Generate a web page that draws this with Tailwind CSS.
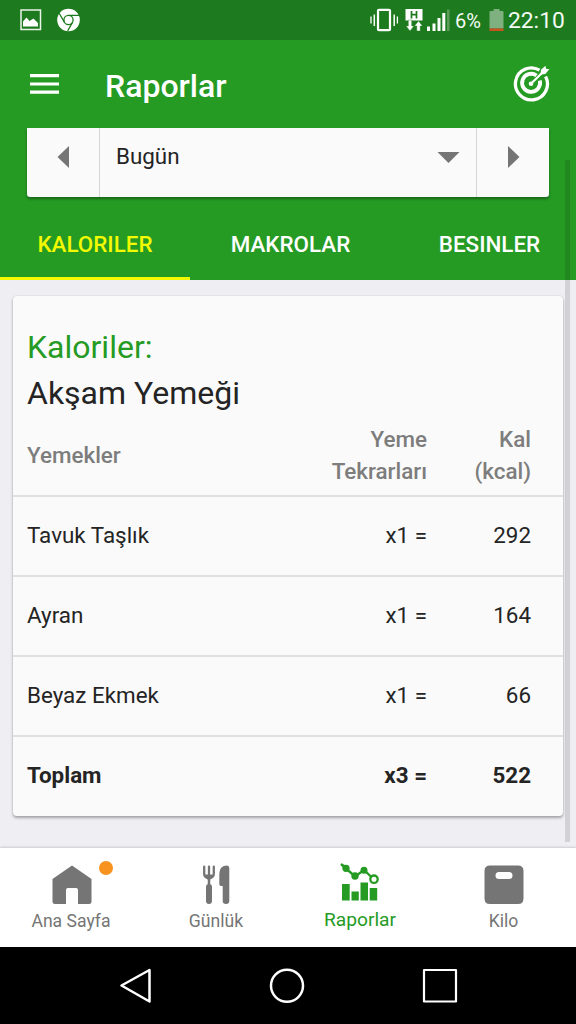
<!DOCTYPE html>
<html lang="tr">
<head>
<meta charset="utf-8">
<title>Raporlar</title>
<script src="https://cdn.jsdelivr.net/npm/@tailwindcss/browser@4"></script>
</head>
<body class="bg-black">
<div class="relative flex h-[1024px] w-[576px] flex-col overflow-hidden bg-[#efeef3] font-[Roboto,'Noto_Sans',sans-serif] text-[#242424]">

  <!-- status bar -->
  <div class="flex h-10 shrink-0 items-center bg-[#1e7a1e] pl-5 text-[#f4fbf4]">
    <svg class="mr-[15px] h-[22px] w-[22px]" viewBox="0 0 22 22"><rect x="1" y="1" width="19.500" height="19.500" fill="none" stroke="#eaf5ea" stroke-width="1.500"/><path d="M3 17.500V12.500L6.500 8.500L9.500 12L13.500 9.500L18 14V17.500Z" fill="#fff"/></svg>
    <svg class="h-6 w-6" viewBox="0 0 24 24"><circle cx="11.500" cy="12" r="11.300" fill="#fff"/><g fill="none" stroke="#1e7a1e" stroke-width="1.300"><circle cx="11.500" cy="12" r="4.600"/><path d="M11.500 7.300H22.500M7.500 14.400L2 5M15.500 14.400L10.600 23"/></g></svg>
    <div class="grow"></div>
    <svg class="h-6 w-[29px]" viewBox="0 0 29 24"><g fill="none" stroke="#fff"><rect x="8" y="1.800" width="12" height="20.400" rx="1" stroke-width="2.200"/><path d="M4.300 6.500V18M24.200 6.500V18" stroke-width="1.500"/><path d="M1 8.500V15.500M27.400 8.500V15.500" stroke-width="1.300"/></g></svg>
    <svg class="ml-[5px] h-6 w-[20px]" viewBox="0 0 20 24"><path d="M1.500 1H18.500V12.500H1.500Z" fill="#fff"/><path d="M7.500 3V10.500M12.500 3V10.500M7.500 6.700H12.500" stroke="#1e7a1e" stroke-width="1.700" fill="none"/><path d="M4.300 12H7.700V18H10L6 23L2 18H4.300ZM12.800 23H16.200V18H18.500L14.500 13L10.500 18H12.800Z" fill="#fff" stroke="#1e7a1e" stroke-width=".4"/></svg>
    <svg class="ml-[3px] h-6 w-[24px]" viewBox="0 0 24 24"><path d="M0 18.500H3V23H0ZM5.500 15.500H8.500V23H5.500ZM10.500 10H13.500V23H10.500ZM15.300 5H18.300V23H15.300Z" fill="#fff"/><path d="M20 1.500H22.500V23H20Z" fill="#5c9d5c"/></svg>
    <span class="ml-[4px] w-[34px] whitespace-nowrap pt-px text-[20px] leading-6">6%</span>
    <svg class="h-6 w-[15px]" viewBox="0 0 15 24"><path d="M1.500 3H4.500V1H10.500V3H13.500Q14.500 3 14.500 4V20.500H.5V4Q.5 3 1.500 3Z" fill="#7fb07f"/><path d="M.5 20.500H14.500V23H.5Z" fill="#cc5020"/></svg>
    <span class="mr-[11px] ml-[4px] w-[57px] whitespace-nowrap pt-[2px] text-[22.800px] leading-6">22:10</span>
  </div>

  <!-- header -->
  <header class="flex h-60 shrink-0 flex-col bg-[#259b24] text-white">
    <div class="flex h-[88px] shrink-0 items-center pl-[30px] pr-[25px]">
      <svg class="h-5 w-[29px]" viewBox="0 0 29 20"><path d="M0 1.700H29M0 10H29M0 18.200H29" stroke="#fff" stroke-width="3.200"/></svg>
      <h1 class="ml-[46px] grow pt-[4px] text-[32px] font-medium leading-10">Raporlar</h1>
      <svg class="mr-px mb-[2px] h-[37px] w-[37px]" viewBox="0 0 37 37" fill="none" stroke="#fff"><path d="M26.500 5.100A16 16 0 1 0 32.600 11.500" stroke-width="3.300"/><path d="M23.500 10.600A9 9 0 1 0 26.800 15.500" stroke-width="3.800"/><path d="M18.200 18.500L30 7" stroke-width="2.200"/><circle cx="18" cy="18.700" r="2.300" fill="#fff" stroke="none"/><path d="M27.500 9.500L28 4.800L32.500 .8L33 3.800L36.300 4.300L32.300 9Z" fill="#fff" stroke="none"/></svg>
    </div>
    <div class="mx-[27px] flex h-[69px] shrink-0 rounded-b-[3px] bg-[#fafafa] shadow-[0_2px_3px_rgba(0,0,0,.35)]">
      <div class="flex w-[73px] justify-center border-r border-[#d6d6d8] pt-[18px]"><svg class="h-[22px] w-3" viewBox="0 0 12 22"><path d="M12 0V22L.5 11Z" fill="#757575"/></svg></div>
      <div class="flex grow justify-between pr-[16px] pl-4">
        <span class="pt-[12px] text-[22.400px] leading-8 text-[#242424]">Bugün</span>
        <svg class="mt-6 h-[11px] w-[23px]" viewBox="0 0 23 11"><path d="M.5 0H22.500L11.500 11Z" fill="#757575"/></svg>
      </div>
      <div class="flex w-[73px] border-l border-[#d6d6d8] pt-[18px] pl-[31px]"><svg class="h-[22px] w-3" viewBox="0 0 12 22"><path d="M0 0V22L11.500 11Z" fill="#757575"/></svg></div>
    </div>
    <nav class="mt-[11px] flex h-[72px] shrink-0 overflow-hidden text-[22.400px] font-medium leading-[72px]">
      <div class="w-[190px] shrink-0 border-b-[3px] border-[#f2f900] text-center text-[#f2f900]">KALORILER</div>
      <div class="w-[201px] shrink-0 text-center">MAKROLAR</div>
      <div class="w-[197px] shrink-0 text-center">BESINLER</div>
    </nav>
  </header>

  <!-- report card -->
  <main class="h-[568px] shrink-0 pt-4 pr-[13px] pl-[13px]">
    <section class="flex h-[520px] flex-col rounded-[4px] bg-[#fafafa] text-[22.400px] shadow-[0_2px_3px_rgba(0,0,0,.3),0_0_2px_rgba(0,0,0,.12)]">
      <h2 class="pt-[28px] pl-[14px] text-[32px] leading-[46px] text-[#259b24]">Kaloriler:</h2>
      <h3 class="pl-[14px] text-[32px] leading-[46px]">Akşam Yemeği</h3>
      <div class="grid h-[81px] shrink-0 grid-cols-[280px_120px_104px] items-center border-b-2 border-[#e0e0e1] pb-[2px] pl-[14px] font-medium leading-8 text-[#7d7d7d]">
        <div>Yemekler</div><div class="text-right">Yeme<br>Tekrarları</div><div class="text-right">Kal<br>(kcal)</div>
      </div>
      <div class="grid h-[80px] shrink-0 grid-cols-[280px_120px_104px] items-center border-b-2 border-[#e0e0e1] pl-[14px]"><div>Tavuk Taşlık</div><div class="text-right">x1 =</div><div class="text-right">292</div></div>
      <div class="grid h-[80px] shrink-0 grid-cols-[280px_120px_104px] items-center border-b-2 border-[#e0e0e1] pl-[14px]"><div>Ayran</div><div class="text-right">x1 =</div><div class="text-right">164</div></div>
      <div class="grid h-[80px] shrink-0 grid-cols-[280px_120px_104px] items-center border-b-2 border-[#e0e0e1] pl-[14px]"><div>Beyaz Ekmek</div><div class="text-right">x1 =</div><div class="text-right">66</div></div>
      <div class="grid h-[78px] shrink-0 grid-cols-[280px_120px_104px] items-center pl-[14px] font-bold"><div>Toplam</div><div class="text-right">x3 =</div><div class="text-right">522</div></div>
    </section>
  </main>

  <!-- bottom navigation -->
  <nav class="z-10 grid h-[99px] shrink-0 grid-cols-4 bg-white text-center text-[17.600px] text-[#757575] shadow-[0_-1px_2px_rgba(0,0,0,.15)]">
    <div class="relative flex flex-col items-center pt-[16px]">
      <svg class="h-10 w-10" viewBox="0 0 40 40"><path d="M20 1.500L39.500 15V37.500Q39.500 40 37 40H26V26Q26 24 24 24H16Q14 24 14 26V40H3Q.5 40 .5 37.500V15Z" fill="#757575"/></svg>
      <div class="absolute top-[13px] left-[99px] h-[14px] w-[14px] rounded-full bg-[#f7931e]"></div>
      <span class="mt-[5px] mr-[2px] leading-6">Ana Sayfa</span>
    </div>
    <div class="flex flex-col items-center pt-[16px]">
      <svg class="h-10 w-10" viewBox="0 0 40 40"><g fill="none" stroke="#757575" stroke-linecap="round"><path d="M8.200 2.700V10Q8.200 13.500 13 14.500Q17.800 13.500 17.800 10V2.700M13 2.700V13" stroke-width="2.300"/><path d="M9 11H17L14 15H12Z" fill="#757575" stroke-width="1"/><path d="M13 14V22" stroke-width="2.500"/><path d="M13 23V37" stroke-width="6"/></g><path d="M31 1.500Q33.300 1.500 33.300 4V36.700A3.200 3.200 0 0 1 26.700 36.700V22H25Q23.300 22 23.300 20V10Q23.300 1.500 31 1.500Z" fill="#757575"/></svg>
      <span class="mt-[5px] leading-6">Günlük</span>
    </div>
    <div class="flex flex-col items-center pt-[13px] text-[#259b24]">
      <svg class="h-[43px] w-10" viewBox="0 0 40 43" fill="#259b24"><path d="M2 23H9.700V39.500H2ZM11.500 30.500H18.800V39.500H11.500ZM20.500 21.500H28V39.500H20.500ZM29.700 27H37.200V39.500H29.700Z"/><path d="M1 3L6 7.500L15 15.500L24 9L33.500 18" fill="none" stroke="#259b24" stroke-width="2.400"/><path d="M.8 3L8.500 4.800L9 9L5 10.500Z"/><circle cx="6" cy="7.300" r="3.600"/><circle cx="15" cy="15" r="3.700"/><circle cx="24" cy="9.300" r="3.500"/><circle cx="34" cy="18.200" r="3.700" fill="#fff" stroke="#259b24" stroke-width="2.300"/></svg>
      <span class="mt-[4px] text-[19.200px] leading-6">Raporlar</span>
    </div>
    <div class="flex flex-col items-center pt-[16px]">
      <svg class="h-10 w-10" viewBox="0 0 40 40"><path fill-rule="evenodd" d="M6 1.500H34Q39.500 1.500 39.500 7V34.500Q39.500 40 34 40H6Q.5 40 .5 34.500V7Q.5 1.500 6 1.500ZM15 8A3.200 3.200 0 0 0 15 15H25A3.200 3.200 0 0 0 25 8Z" fill="#757575"/></svg>
      <span class="mt-[5px] mr-px leading-6">Kilo</span>
    </div>
  </nav>

  <!-- system navigation -->
  <div class="z-10 flex h-[77px] shrink-0 items-center bg-black pl-[119px]">
    <svg class="h-9 w-[339px]" viewBox="0 0 339 36" fill="none" stroke="#fff" stroke-width="2.500" stroke-linejoin="round"><path d="M30.500 2V33.500L2.500 17.500Z"/><circle cx="168" cy="17.800" r="16"/><path d="M305 2H337V33.500H305Z" stroke-width="2.200"/></svg>
  </div>

  <!-- scrollbar overlay -->
  <div class="absolute top-[160px] left-[565px] h-[682px] w-[5px] bg-black/12"></div>
</div>
</body>
</html>
